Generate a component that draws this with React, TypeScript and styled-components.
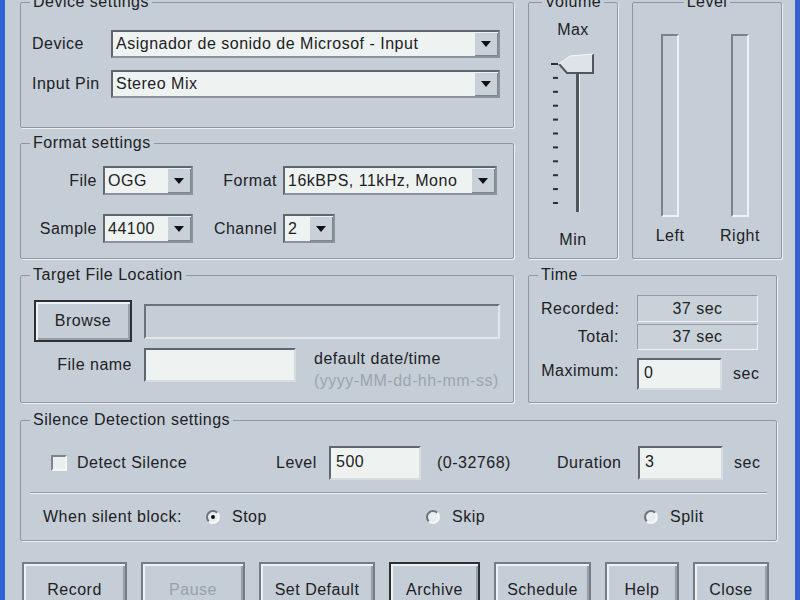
import React from "react";
import styled, { createGlobalStyle } from "styled-components";

const BG = "#c5ced6";
const FIELD = "#eef3f1";
const DARK = "#5f676e";

const GlobalStyle = createGlobalStyle`
  html, body {
    margin: 0;
    padding: 0;
    background: ${BG};
  }
  body {
    font-family: "Liberation Sans", Arial, sans-serif;
    font-size: 16px;
    letter-spacing: 0.5px;
    color: #1d2125;
  }
  #root {
    width: 800px;
    height: 600px;
    overflow: hidden;
  }
`;

const Window = styled.div`
  box-sizing: border-box;
  width: 800px;
  height: 600px;
  background: ${BG};
  border-left: 5px solid #2f63d6;
  border-right: 5px solid #3560d0;
  padding: 0 13px 0 15px;
  overflow: hidden;
`;

const TopArea = styled.div`
  display: grid;
  grid-template-columns: 494px 90px 150px;
  column-gap: 14px;
  margin-top: -7px;
  height: 266px;
`;

const Stack = styled.div`
  display: flex;
  flex-direction: column;
  gap: 6px;
`;

const MiddleArea = styled.div`
  display: grid;
  grid-template-columns: 494px 249px;
  column-gap: 14px;
  margin-top: 7px;
`;

// group box (fieldset + legend)
const Group = styled.fieldset<{ $h: number }>`
  box-sizing: border-box;
  height: ${(p) => p.$h}px;
  flex-shrink: 0;
  margin: 0;
  padding: 0;
  min-width: 0;
  border: 1px solid #8e98a0;
  border-radius: 2px;
  box-shadow: 1px 1px 0 #edf1f3;
`;

const SilenceGroup = styled(Group)`
  margin: 8px 5px 0 0;
`;

const Legend = styled.legend<{ $center?: boolean }>`
  padding: 0 3px;
  margin-left: ${(p) => (p.$center ? "auto" : "9px")};
  margin-right: ${(p) => (p.$center ? "auto" : "0")};
  line-height: 18px;
`;

const Body = styled.div<{ $pad: string }>`
  padding: ${(p) => p.$pad};
`;

const FormGrid = styled.div<{ $cols: string; $rowGap: number; $colGap?: number }>`
  display: grid;
  grid-template-columns: ${(p) => p.$cols};
  row-gap: ${(p) => p.$rowGap}px;
  column-gap: ${(p) => p.$colGap ?? 6}px;
  align-items: center;
`;

const Label = styled.span<{ $right?: boolean; $top?: number }>`
  text-align: ${(p) => (p.$right ? "right" : "left")};
  white-space: nowrap;
  ${(p) => (p.$top !== undefined ? `align-self: start; margin-top: ${p.$top}px;` : "")}
`;

// combo box
const Combo = styled.div<{ $w?: number; $h?: number }>`
  box-sizing: border-box;
  width: ${(p) => (p.$w ? `${p.$w}px` : "100%")};
  height: ${(p) => p.$h ?? 29}px;
  display: flex;
  border: 2px solid;
  border-color: ${DARK} #8a939a #8a939a ${DARK};
  background: ${FIELD};
`;

const ComboValue = styled.span<{ $h?: number }>`
  flex: 1;
  padding-left: 3px;
  line-height: ${(p) => (p.$h ?? 29) - 4}px;
  white-space: nowrap;
  overflow: hidden;
`;

const ComboButton = styled.span`
  width: 24px;
  display: flex;
  align-items: center;
  justify-content: center;
  background: #c9d1d8;
  box-shadow: inset 1px 1px 0 #eef2f4, inset -1px -1px 0 #7d868e;
`;

const Arrow = () => (
  <svg width="10" height="6" viewBox="0 0 10 6">
    <path d="M0 0 L10 0 L5 6 Z" fill="#111" />
  </svg>
);

const Select = ({ value, w, h }: { value: string; w?: number; h?: number }) => (
  <Combo $w={w} $h={h}>
    <ComboValue $h={h}>{value}</ComboValue>
    <ComboButton>
      <Arrow />
    </ComboButton>
  </Combo>
);

const TextBox = styled.div<{ $w: number; $h: number }>`
  box-sizing: border-box;
  width: ${(p) => p.$w}px;
  height: ${(p) => p.$h}px;
  flex-shrink: 0;
  background: ${FIELD};
  border: 2px solid;
  border-color: ${DARK} #d6dde2 #d6dde2 ${DARK};
  padding-left: 5px;
  line-height: ${(p) => p.$h - 6}px;
`;

const DisabledBox = styled.div`
  box-sizing: border-box;
  height: 35px;
  background: ${BG};
  border: 2px solid;
  border-color: #6b747b #e0e6ea #e0e6ea #6b747b;
`;

const ReadOnly = styled.div<{ $h: number }>`
  box-sizing: border-box;
  height: ${(p) => p.$h}px;
  border: 1px solid;
  border-color: #939ca3 #eef2f4 #eef2f4 #939ca3;
  background: #cad2d9;
  text-align: center;
  line-height: ${(p) => p.$h - 2}px;
`;

// volume / level
const Column = styled.div<{ $pad: string }>`
  display: flex;
  flex-direction: column;
  align-items: center;
  padding: ${(p) => p.$pad};
`;

const SliderArt = styled.svg`
  margin-top: 11px;
  display: block;
`;

const SmallCaption = styled.span<{ $mt: number }>`
  margin-top: ${(p) => p.$mt}px;
  line-height: 18px;
`;

const Meters = styled.div`
  display: grid;
  grid-template-columns: 70px 70px;
  padding: 23px 6px 0 2px;
`;

const MeterBar = styled.div`
  box-sizing: border-box;
  width: 18px;
  height: 183px;
  border: 2px solid;
  border-color: #7a838b #eef2f4 #eef2f4 #7a838b;
  background: ${BG};
`;

const VolumeSlider = () => {
  const ticks = Array.from({ length: 11 }, (_, i) => 14 + i * 13.9);
  return (
    <SliderArt width="60" height="170" viewBox="0 0 60 170">
      {ticks.map((y, i) => (
        <rect key={i} x={i === 0 ? 8 : 10} y={y - 1} width={i === 0 ? 7 : 5} height="2" fill="#2a2f33" />
      ))}
      <rect x="33" y="12" width="3" height="150" fill="#4f575e" />
      <rect x="36" y="12" width="1" height="150" fill="#eef2f4" />
      <polygon points="16,14 27,6 50,4 50,23 24,23" fill="#dde3e8" />
      <polyline points="16,14 24,23 50,23 50,4" fill="none" stroke="#4f575e" strokeWidth="2" />
      <polyline points="16,14 27,6 50,4" fill="none" stroke="#f6f8f9" strokeWidth="1" />
    </SliderArt>
  );
};

// buttons
const Button = styled.div<{ $w: number; $h: number; $default?: boolean; $disabled?: boolean }>`
  box-sizing: border-box;
  width: ${(p) => p.$w}px;
  height: ${(p) => p.$h}px;
  display: flex;
  align-items: center;
  justify-content: center;
  border: 2px solid ${(p) => (p.$default ? "#2b3035" : "#747d85")};
  box-shadow: inset 2px 2px 0 #edf1f3, inset -2px -2px 0 #96a0a8;
  background: ${BG};
  color: ${(p) => (p.$disabled ? "#97a1a9" : "#1d2125")};
  flex-shrink: 0;
`;

const ButtonRow = styled.div`
  display: flex;
  gap: 14px;
  margin: 21px 0 0 2px;
`;

const Hint = styled.div`
  margin-left: 18px;
  line-height: 22px;
`;

const Muted = styled.div`
  color: #9ba5ad;
`;

const InlineRow = styled.div<{ $mt?: number; $start?: boolean }>`
  display: flex;
  align-items: ${(p) => (p.$start ? "flex-start" : "center")};
  margin-top: ${(p) => p.$mt ?? 0}px;
`;

const Unit = styled.span`
  margin-left: 11px;
`;

// silence detection
const SilenceRow = styled.div<{ $cols: string; $left: number }>`
  display: grid;
  grid-template-columns: ${(p) => p.$cols};
  align-items: center;
  padding-left: ${(p) => p.$left}px;
`;

const Separator = styled.div`
  height: 0;
  border-top: 1px solid #8e98a0;
  border-bottom: 1px solid #eef2f4;
  margin: 12px 0 14px;
`;

const Check = styled.span`
  box-sizing: border-box;
  width: 16px;
  height: 16px;
  border: 2px solid;
  border-color: #7c858c #f4f7f8 #f4f7f8 #7c858c;
  background: #e9eef0;
  margin-right: 10px;
  flex-shrink: 0;
`;

const Radio = styled.span<{ $on?: boolean }>`
  box-sizing: border-box;
  width: 14px;
  height: 14px;
  border-radius: 50%;
  border: 2px solid;
  border-color: #6b747b #f4f7f8 #f4f7f8 #6b747b;
  background: #e8edf0;
  margin-right: 12px;
  display: flex;
  align-items: center;
  justify-content: center;
  flex-shrink: 0;
  &::after {
    content: "";
    width: 4px;
    height: 4px;
    border-radius: 50%;
    background: ${(p) => (p.$on ? "#111" : "transparent")};
  }
`;

const Pad = styled.span<{ $l: number }>`
  padding-left: ${(p) => p.$l}px;
  white-space: nowrap;
`;

const buttons = [
  { label: "Record", w: 105 },
  { label: "Pause", w: 104, disabled: true },
  { label: "Set Default", w: 116 },
  { label: "Archive", w: 91, def: true },
  { label: "Schedule", w: 97 },
  { label: "Help", w: 74 },
  { label: "Close", w: 76 },
];

export default function App() {
  return (
    <>
      <GlobalStyle />
      <Window>
        <TopArea>
          <Stack>
            <Group $h={135}>
              <Legend>Device settings</Legend>
              <Body $pad="19px 13px 0 11px">
                <FormGrid $cols="73px 1fr" $rowGap={12}>
                  <Label>Device</Label>
                  <Select value="Asignador de sonido de Microsof - Input" h={28} />
                  <Label>Input Pin</Label>
                  <Select value="Stereo Mix" h={28} />
                </FormGrid>
              </Body>
            </Group>
            <Group $h={125}>
              <Legend>Format settings</Legend>
              <Body $pad="14px 0 0 11px">
                <FormGrid $cols="65px 90px 78px auto" $rowGap={19}>
                  <Label $right>File</Label>
                  <Select value="OGG" w={90} />
                  <Label $right>Format</Label>
                  <Select value="16kBPS, 11kHz, Mono" w={214} />
                  <Label $right>Sample</Label>
                  <Select value="44100" w={90} />
                  <Label $right>Channel</Label>
                  <Select value="2" w={52} />
                </FormGrid>
              </Body>
            </Group>
          </Stack>

          <Group $h={266}>
            <Legend $center>Volume</Legend>
            <Column $pad="10px 0 0">
              <SmallCaption $mt={0}>Max</SmallCaption>
              <VolumeSlider />
              <SmallCaption $mt={11}>Min</SmallCaption>
            </Column>
          </Group>

          <Group $h={266}>
            <Legend $center>Level</Legend>
            <Meters>
              <Column $pad="0">
                <MeterBar />
                <SmallCaption $mt={10}>Left</SmallCaption>
              </Column>
              <Column $pad="0">
                <MeterBar />
                <SmallCaption $mt={10}>Right</SmallCaption>
              </Column>
            </Meters>
          </Group>
        </TopArea>

        <MiddleArea>
          <Group $h={137}>
            <Legend>Target File Location</Legend>
            <Body $pad="16px 13px 0 13px">
              <FormGrid $cols="98px 1fr" $rowGap={6} $colGap={12}>
                <Button $w={98} $h={42} $default>
                  Browse
                </Button>
                <DisabledBox />
                <Label $right $top={8}>
                  File name
                </Label>
                <InlineRow $start>
                  <TextBox $w={152} $h={34} />
                  <Hint>
                    <div>default date/time</div>
                    <Muted>(yyyy-MM-dd-hh-mm-ss)</Muted>
                  </Hint>
                </InlineRow>
              </FormGrid>
            </Body>
          </Group>

          <Group $h={137}>
            <Legend>Time</Legend>
            <Body $pad="11px 0 0 12px">
              <FormGrid $cols="78px 121px" $rowGap={2} $colGap={18}>
                <Label $right>Recorded:</Label>
                <ReadOnly $h={27}>37 sec</ReadOnly>
                <Label $right>Total:</Label>
                <ReadOnly $h={26}>37 sec</ReadOnly>
                <Label $right>Maximum:</Label>
                <InlineRow $mt={6}>
                  <TextBox $w={85} $h={32}>0</TextBox>
                  <Unit>sec</Unit>
                </InlineRow>
              </FormGrid>
            </Body>
          </Group>
        </MiddleArea>

        <SilenceGroup $h={130}>
          <Legend>Silence Detection settings</Legend>
          <Body $pad="17px 9px 0 9px">
            <SilenceRow $cols="225px 53px 92px 136px 81px 85px auto" $left={21}>
              <InlineRow>
                <Check />
                Detect Silence
              </InlineRow>
              <Label>Level</Label>
              <TextBox $w={92} $h={34}>500</TextBox>
              <Pad $l={16}>(0-32768)</Pad>
              <Label>Duration</Label>
              <TextBox $w={85} $h={34}>3</TextBox>
              <Pad $l={11}>sec</Pad>
            </SilenceRow>
            <Separator />
            <SilenceRow $cols="163px 220px 218px auto" $left={13}>
              <Label>When silent block:</Label>
              <InlineRow>
                <Radio $on />
                Stop
              </InlineRow>
              <InlineRow>
                <Radio />
                Skip
              </InlineRow>
              <InlineRow>
                <Radio />
                Split
              </InlineRow>
            </SilenceRow>
          </Body>
        </SilenceGroup>

        <ButtonRow>
          {buttons.map((b) => (
            <Button key={b.label} $w={b.w} $h={56} $default={b.def} $disabled={b.disabled}>
              {b.label}
            </Button>
          ))}
        </ButtonRow>
      </Window>
    </>
  );
}
